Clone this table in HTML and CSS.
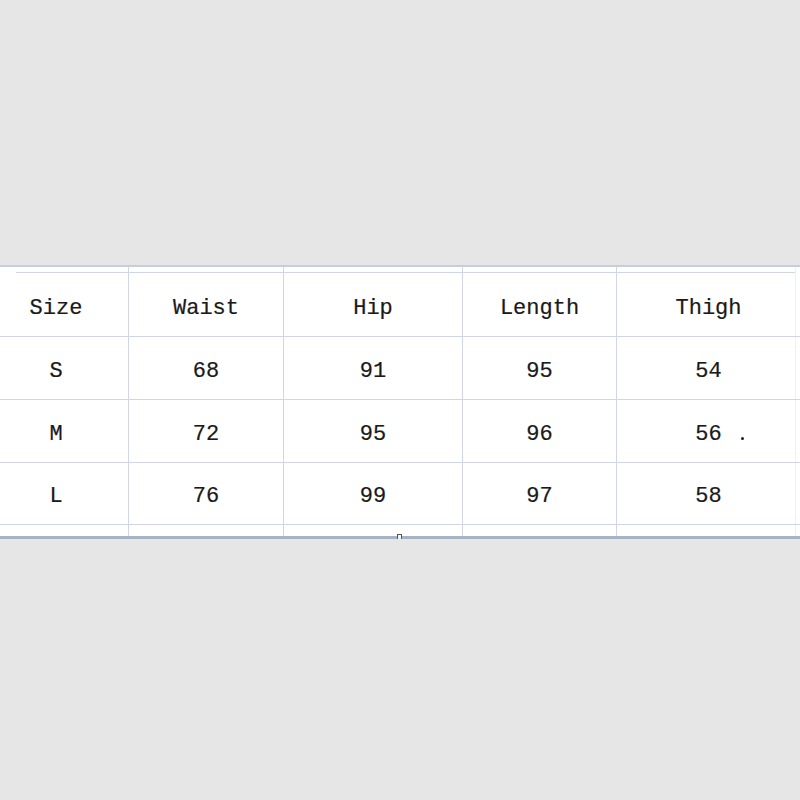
FILE: index.html
```html
<!DOCTYPE html>
<html>
<head>
<meta charset="utf-8">
<link rel="stylesheet" href="styles.css">
</head>
<body>
<div class="top"></div>
<div class="sheet">
  <div class="grid">
    <div class="cell head first">Size</div>
    <div class="cell head">Waist</div>
    <div class="cell head">Hip</div>
    <div class="cell head">Length</div>
    <div class="cell head last">Thigh</div>

    <div class="cell r1 first">S</div>
    <div class="cell r1">68</div>
    <div class="cell r1">91</div>
    <div class="cell r1">95</div>
    <div class="cell r1 last">54</div>

    <div class="cell r2 first">M</div>
    <div class="cell r2">72</div>
    <div class="cell r2">95</div>
    <div class="cell r2">96</div>
    <div class="cell r2 last">56<span class="dot"></span></div>

    <div class="cell r3 first">L</div>
    <div class="cell r3">76</div>
    <div class="cell r3">99</div>
    <div class="cell r3">97</div>
    <div class="cell r3 last">58</div>

    <div class="cell tail"></div>
    <div class="cell tail"></div>
    <div class="cell tail"></div>
    <div class="cell tail"></div>
    <div class="cell tail last"></div>
  </div>
  <div class="bar"><span class="mark"></span></div>
</div>
</body>
</html>
```

FILE: styles.css
```css
html, body {
  margin: 0;
  padding: 0;
  background: #e6e6e6;
  width: 800px;
  height: 800px;
  overflow: hidden;
}

.top {
  height: 265px;
}

.sheet {
  position: relative;
  border-top: 2px solid #c5cde0;
  background: #ffffff;
}

.grid {
  display: grid;
  grid-template-columns: 129px 155px 179px 154px 183px;
  grid-template-rows: 70px 63px 63px 62px 11px;
  font-family: "Liberation Mono", "DejaVu Sans Mono", monospace;
  font-size: 22px;
  color: #1a1a1a;
  -webkit-text-stroke: 0.2px #1a1a1a;
}

.cell {
  box-sizing: border-box;
  border-right: 1px solid #d0d5e8;
  border-bottom: 1px solid #d0d5e8;
  display: flex;
  align-items: center;
  justify-content: center;
  padding-top: 6px;
  position: relative;
}

.cell.first {
  padding-right: 16px;
}

.cell.last {
  border-right: none;
  box-shadow: inset -4px 0 0 #ffffff, inset -5px 0 0 #f0f1f7;
}

.cell.head {
  padding-top: 13px;
  background-image: linear-gradient(#d0d5e8, #d0d5e8);
  background-size: 100% 1px;
  background-position: 0 5px;
  background-repeat: no-repeat;
}

.cell.head.first {
  background-position: 16px 5px;
}

.cell.tail {
  border-bottom: none;
  padding: 0;
}

.dot {
  position: absolute;
  left: 124px;
  top: 37px;
  width: 3px;
  height: 3px;
  border-radius: 50%;
  background: #222;
}

.bar {
  position: relative;
  height: 3px;
  background: #a7b2c7;
}

.mark {
  position: absolute;
  left: 397px;
  top: -2px;
  width: 5px;
  height: 5px;
  box-sizing: border-box;
  border: 1px solid #555;
  border-bottom: none;
  background: #f4f4f4;
}
```
